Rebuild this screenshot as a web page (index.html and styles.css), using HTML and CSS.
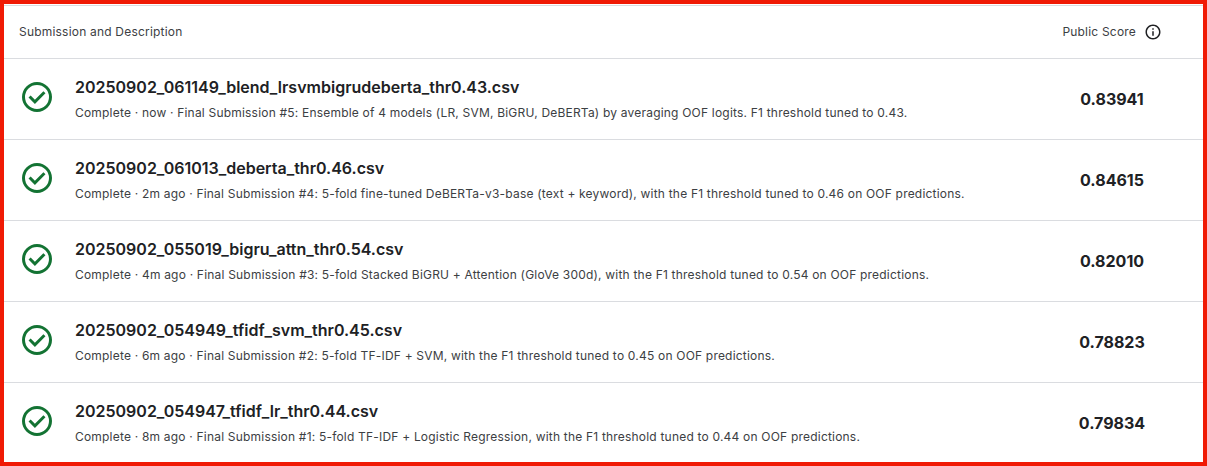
FILE: index.html
```html
<!DOCTYPE html>
<html lang="en">
<head>
<meta charset="utf-8">
<title>Submissions</title>
<link rel="stylesheet" href="styles.css">
</head>
<body>
<svg width="0" height="0" class="defs"><symbol id="done" viewBox="0 -960 960 960"><path d="m424-296 282-282-56-56-226 226-114-114-56 56 170 170Zm56 216q-83 0-156-31.500T197-197q-54-54-85.500-127T80-480q0-83 31.500-156T197-763q54-54 127-85.500T480-880q83 0 156 31.500T763-763q54 54 85.500 127T880-480q0 83-31.500 156T763-197q-54 54-127 85.500T480-80Zm0-80q134 0 227-93t93-227q0-134-93-227t-227-93q-134 0-227 93t-93 227q0 134 93 227t227 93Z"/></symbol></svg>
<main class="board">
<header class="head"><span>Submission and Description</span><span class="score-label"><span>Public Score</span><svg class="info" viewBox="0 0 24 24"><path d="M11 7h2v2h-2zm0 4h2v6h-2zm1-9C6.480 2 2 6.480 2 12s4.480 10 10 10 10-4.480 10-10S17.520 2 12 2m0 18c-4.410 0-8-3.590-8-8s3.590-8 8-8 8 3.590 8 8-3.590 8-8 8"/></svg></span></header>
<ul class="list">
<li class="row"><svg class="status"><use href="#done"/></svg><div class="info-text"><div class="name">20250902_061149_blend_lrsvmbigrudeberta_thr0.43.csv</div><div class="desc">Complete · now · Final Submission #5: Ensemble of 4 models (LR, SVM, BiGRU, DeBERTa) by averaging OOF logits. F1 threshold tuned to 0.43.</div></div><div class="score">0.83941</div></li>
<li class="row"><svg class="status"><use href="#done"/></svg><div class="info-text"><div class="name">20250902_061013_deberta_thr0.46.csv</div><div class="desc">Complete · 2m ago · Final Submission #4: 5-fold fine-tuned DeBERTa-v3-base (text + keyword), with the F1 threshold tuned to 0.46 on OOF predictions.</div></div><div class="score">0.84615</div></li>
<li class="row"><svg class="status"><use href="#done"/></svg><div class="info-text"><div class="name">20250902_055019_bigru_attn_thr0.54.csv</div><div class="desc">Complete · 4m ago · Final Submission #3: 5-fold Stacked BiGRU + Attention (GloVe 300d), with the F1 threshold tuned to 0.54 on OOF predictions.</div></div><div class="score">0.82010</div></li>
<li class="row"><svg class="status"><use href="#done"/></svg><div class="info-text"><div class="name">20250902_054949_tfidf_svm_thr0.45.csv</div><div class="desc">Complete · 6m ago · Final Submission #2: 5-fold TF-IDF + SVM, with the F1 threshold tuned to 0.45 on OOF predictions.</div></div><div class="score">0.78823</div></li>
<li class="row"><svg class="status"><use href="#done"/></svg><div class="info-text"><div class="name">20250902_054947_tfidf_lr_thr0.44.csv</div><div class="desc">Complete · 8m ago · Final Submission #1: 5-fold TF-IDF + Logistic Regression, with the F1 threshold tuned to 0.44 on OOF predictions.</div></div><div class="score">0.79834</div></li>
</ul>
</main>
</body>
</html>
```
FILE: styles.css
```css
* { box-sizing: border-box; }
body { margin: 0; background: #fff; font-family: Inter, sans-serif; color: #202124; }
.defs { display: block; }
.board { width: 1207px; height: 466px; border: 4px solid #f01a05; padding-top: 1px; overflow: hidden; }
.head { display: flex; justify-content: space-between; align-items: center; height: 53px; border-top: 1px solid #dadce0; padding: 0 41px 0 15px; font-size: 12px; line-height: 16px; letter-spacing: 0.2px; color: #3c4043; }
.score-label { display: flex; align-items: center; gap: 8px; }
.info { width: 18px; height: 18px; fill: #202124; }
.list { margin: 0; padding: 0; list-style: none; }
.row { display: flex; height: 81px; border-top: 1px solid #dadce0; padding-left: 15px; }
.status { width: 36px; height: 36px; margin: 20px 20px 0 0; fill: #137333; flex: none; }
.info-text { flex: 1; padding-top: 18px; white-space: nowrap; }
.name { font-size: 16px; line-height: 20px; font-weight: 600; }
.desc { margin-top: 8px; font-size: 12px; line-height: 16px; letter-spacing: 0.2px; color: #3c4043; }
.score { width: 182px; padding: 30px 0 0; text-align: center; font-size: 16px; line-height: 20px; font-weight: 700; }
```
